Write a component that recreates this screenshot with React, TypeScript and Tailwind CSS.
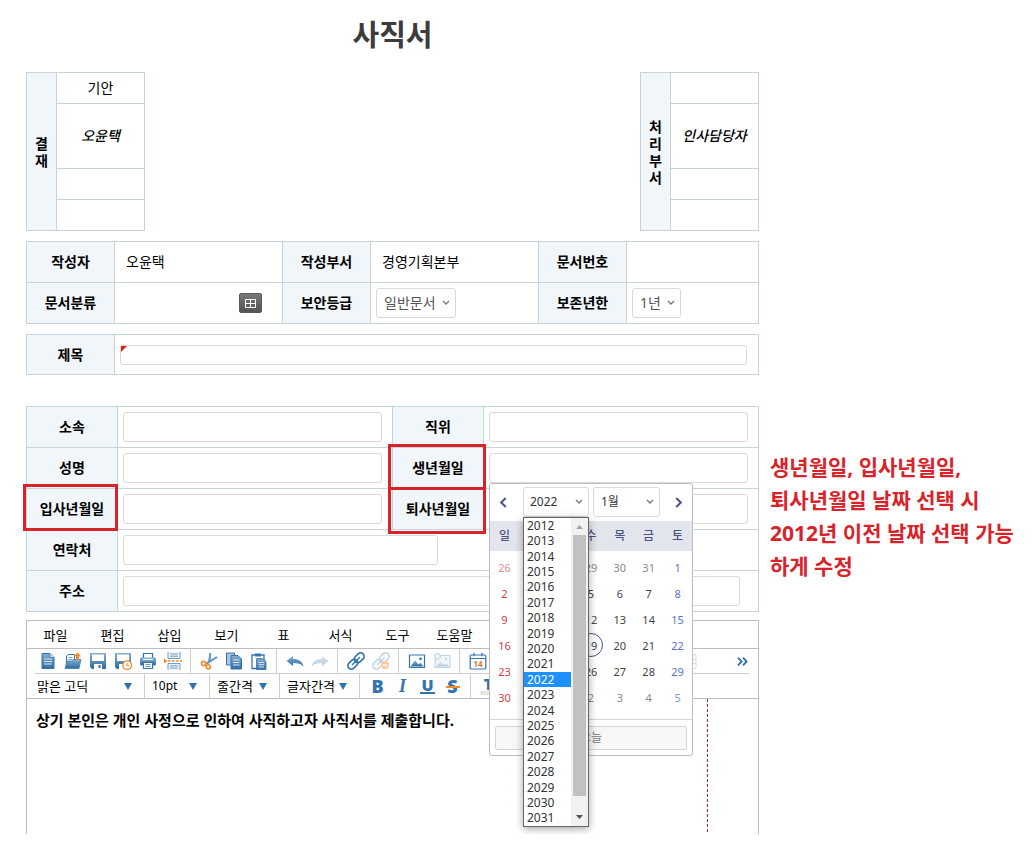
import type { ReactNode } from "react";

const line = "border-[#c6d4da]";
const th = "relative border-r border-b border-[#c6d4da] bg-[#f0f6f9] text-center font-bold";
const td = "border-r border-b border-[#c6d4da]";
const tableBase = "w-full table-fixed border-separate border-spacing-0 border-t border-l border-[#c6d4da]";
const field = "block h-[30px] rounded-[3px] border border-[#d9d9d9] bg-white px-2 outline-none";

const blue = "#3474ad";
const mid = "#6f9dc6";
const pale = "#c3d5e6";
const orange = "#f08a2a";

function Icon({ children, className = "size-[18px]" }: { children: ReactNode; className?: string }) {
  return (
    <svg viewBox="0 0 18 18" className={className} fill="none" aria-hidden="true">
      {children}
    </svg>
  );
}

function Gradients() {
  return (
    <svg className="absolute size-0" aria-hidden="true">
      <defs>
        <linearGradient id="steel" x1="0" y1="0" x2="0" y2="1">
          <stop offset="0" stopColor="#86aed2" />
          <stop offset="1" stopColor="#2f6ca3" />
        </linearGradient>
        <linearGradient id="fade" x1="0" y1="0" x2="0" y2="1">
          <stop offset="0" stopColor="#dbe6f0" />
          <stop offset="1" stopColor="#b4cadf" />
        </linearGradient>
      </defs>
    </svg>
  );
}

const icons = {
  doc: (
    <Icon>
      <path d="M3 1.5h8l4 4v11H3z" fill="url(#steel)" stroke={blue} />
      <path d="M11 1.5v4h4" fill="#dce8f3" stroke={blue} strokeWidth=".8" />
      <path d="M5 7h8M5 9.5h8M5 12h8" stroke="#d6e4f1" />
    </Icon>
  ),
  open: (
    <Icon>
      <path d="M2.5 14V4l2-1.500h6V11z" fill="#fff" stroke={blue} />
      <path d="M4.500 5.500h4M4.500 7.500h4" stroke={mid} />
      <path d="M1 16.500 3 9h5l1.500-1.500H17l-2 9z" fill="url(#steel)" stroke={blue} strokeWidth=".7" />
      <path d="M13.500.5 17 4.200h-2V8h-3V4.200h-2z" fill={orange} />
    </Icon>
  ),
  save: (
    <Icon>
      <path d="M1 1h16v16H3l-2-2z" fill="url(#steel)" />
      <path d="M3 2.500h12V9H3z" fill="#fff" />
      <path d="M5 12h8v5H5z" fill="#fff" />
      <path d="M9.500 13h2v3h-2z" fill={blue} />
    </Icon>
  ),
  saveTimed: (
    <Icon>
      <path d="M1 1h16v16H3l-2-2z" fill="url(#steel)" />
      <path d="M3 2.500h12V9H3z" fill="#fff" />
      <path d="M5 12h5v5H5z" fill="#fff" />
      <circle cx="13.200" cy="13.200" r="4.300" fill="#fff" stroke={orange} strokeWidth="1.300" />
      <path d="M13 11v2.500h2.300" stroke={orange} strokeWidth="1.100" />
    </Icon>
  ),
  print: (
    <Icon>
      <path d="M4.500 6V1.500h9V6" fill="#fff" stroke={blue} strokeWidth="1.200" />
      <rect x="1" y="5.500" width="16" height="8" rx="1.500" fill="url(#steel)" />
      <path d="M4 7.500h10" stroke="#fff" strokeWidth="1.200" />
      <path d="M4.500 10.500h9v6h-9z" fill="#fff" stroke={blue} strokeWidth="1.200" />
      <path d="M6.500 12.500h5M6.500 14.500h5" stroke={mid} />
    </Icon>
  ),
  pageBreak: (
    <Icon>
      <path d="M4 0v6.500h12V0M4 18v-6.500h12V18" fill="#eef4f9" stroke={mid} />
      <path d="M6 2h8M6 4.200h8M6 13.800h8M6 16h8" stroke={mid} />
      <path d="M4 9h14" stroke={orange} strokeWidth="1.300" strokeDasharray="2.500 1.500" />
      <path d="M0 6.500 3.500 9 0 11.500z" fill={orange} />
    </Icon>
  ),
  cut: (
    <Icon>
      <path d="M10.500 1 9 11M17 5 6.500 11.500" stroke="url(#steel)" strokeWidth="2" />
      <path d="M10.200 1.200 9.300 10.500M16.800 5.200 7 11" stroke={mid} strokeWidth="1.800" />
      <circle cx="3.600" cy="11.500" r="2.100" stroke={orange} strokeWidth="1.600" />
      <circle cx="8.300" cy="14.800" r="2.100" stroke={orange} strokeWidth="1.600" />
    </Icon>
  ),
  copy: (
    <Icon>
      <path d="M1.500 1h8v12h-8z" fill="#a9c5de" stroke={blue} />
      <path d="M6 3.500h7l3.500 3.500v10H6z" fill="url(#steel)" stroke={blue} />
      <path d="M8 8h6.500M8 10.500h6.500M8 13h6.500" stroke="#d6e4f1" />
    </Icon>
  ),
  paste: (
    <Icon>
      <path d="M2 3h12v13.500H2z" fill="#fff" stroke={blue} strokeWidth="1.300" />
      <path d="M5 1.500h6v3H5z" fill={blue} />
      <path d="M6.500 6.500h6l3.500 3v8H6.500z" fill="url(#steel)" stroke={blue} strokeWidth=".8" />
      <path d="M8.500 10.500h5.500M8.500 12.700h5.500M8.500 15h5.500" stroke="#d6e4f1" />
    </Icon>
  ),
  undo: (
    <Icon>
      <path d="M0.500 9 7 4v3c6 0 9.500 2.500 10.500 7.500C15 11.800 12 11 7 11v3z" fill="url(#steel)" />
    </Icon>
  ),
  redo: (
    <Icon>
      <path d="M17.500 9 11 4v3c-6 0-9.500 2.500-10.500 7.500C3 11.800 6 11 11 11v3z" fill="url(#fade)" />
    </Icon>
  ),
  link: (
    <Icon>
      <g transform="rotate(-45 9 9)" strokeWidth="1.700" stroke={blue}>
        <rect x="-1" y="5.500" width="11" height="7" rx="3.500" />
        <rect x="8" y="5.500" width="11" height="7" rx="3.500" />
        <path d="M3.500 9h11" strokeWidth="1.400" />
      </g>
    </Icon>
  ),
  unlink: (
    <Icon>
      <g transform="rotate(-45 9 9)" strokeWidth="1.700" stroke={pale}>
        <rect x="-1" y="5.500" width="11" height="7" rx="3.500" />
        <rect x="8" y="5.500" width="11" height="7" rx="3.500" />
        <path d="M3.500 9h11" strokeWidth="1.400" />
      </g>
      <circle cx="13" cy="13" r="4.200" fill="#f9cfa5" />
      <path d="M10.800 13h4.400" stroke="#fff" strokeWidth="1.300" />
    </Icon>
  ),
  image: (
    <Icon>
      <path d="M1.500 3h15v12.500h-15z" fill="#fff" stroke={blue} strokeWidth="1.200" />
      <path d="m2.500 14.500 4.500-6 3.500 4 2-1.800 3 3.800z" fill="url(#steel)" />
      <circle cx="12.500" cy="6.800" r="1.400" fill={blue} />
    </Icon>
  ),
  imageEdit: (
    <Icon>
      <path d="M3 3.500h14v12H2v-8z" fill="#f1f6fa" stroke={pale} strokeWidth="1.200" />
      <path d="m3 14.500 4.500-5 3.500 3.500 2-1.500 3.500 3z" fill="url(#fade)" />
      <circle cx="4.500" cy="4.500" r="2.600" fill="#fff" stroke={pale} strokeWidth="2" strokeDasharray="1.600 .6" />
      <circle cx="13" cy="7" r="1.200" fill={pale} />
    </Icon>
  ),
  date: (
    <Icon>
      <rect x="1.200" y="3" width="15.600" height="14" rx="1" fill="#fff" stroke={blue} strokeWidth="1.200" />
      <path d="M1.200 6.500h15.600M5 .8v3.500M13 .8v3.500" stroke={blue} strokeWidth="1.200" />
      <text x="9" y="15" textAnchor="middle" fontSize="8" fontWeight="700" fontFamily="Noto Sans" fill="#d9772a">14</text>
    </Icon>
  ),
  grid: (
    <Icon>
      <path d="M1 2.500h16v14H1zM1 7h16M1 11.500h16M6 2.500v14M12 2.500v14" stroke="#d5dde5" />
    </Icon>
  ),
};

function ToolGroup({ items, first, last }: { items: [string, ReactNode][]; first?: boolean; last?: boolean }) {
  return (
    <div className={`flex shrink-0 pr-[5px] ${first ? "" : "pl-[5px]"} ${last ? "" : "border-r border-[#cfcfcf]"}`}>
      {items.map(([label, icon]) => (
        <button key={label} type="button" aria-label={label} className="flex w-[25px] items-center justify-center">
          {icon}
        </button>
      ))}
    </div>
  );
}

function Chevron() {
  return (
    <svg viewBox="0 0 8 6" className="pointer-events-none absolute right-[6px] top-1/2 h-[6px] w-2 -translate-y-1/2" fill="none" aria-hidden="true">
      <path d="m1 1 3 3 3-3" stroke="#777" strokeWidth="1.300" />
    </svg>
  );
}

function Triangle() {
  return (
    <svg viewBox="0 0 8 7" className="pointer-events-none absolute right-3 top-[9px] h-[7px] w-2" aria-hidden="true">
      <path d="M0 0h8L4 7z" fill="#2f73b0" />
    </svg>
  );
}

function ApprovalTable({ title, rows }: { title: string; rows: string[] }) {
  return (
    <table className={`w-[119px] table-fixed border-separate border-spacing-0 border-t border-l ${line}`}>
      <colgroup>
        <col className="w-[30px]" />
        <col />
      </colgroup>
      <tbody>
        {rows.map((text, i) => (
          <tr key={i}>
            {i === 0 && (
              <th rowSpan={4} className={`${th} px-2 leading-[17px] break-all`}>
                {title}
              </th>
            )}
            <td className={`${td} p-0 text-center ${i === 1 ? "h-[65px] font-medium italic" : "h-[31px]"}`}>{text}</td>
          </tr>
        ))}
      </tbody>
    </table>
  );
}

const weekdays = ["일", "월", "화", "수", "목", "금", "토"];
const weeks = [
  [26, 27, 28, 29, 30, 31, 1],
  [2, 3, 4, 5, 6, 7, 8],
  [9, 10, 11, 12, 13, 14, 15],
  [16, 17, 18, 19, 20, 21, 22],
  [23, 24, 25, 26, 27, 28, 29],
  [30, 31, 1, 2, 3, 4, 5],
];

function dayColor(week: number, day: number, date: number) {
  const outside = (week === 0 && date > 20) || (week === 5 && date < 20);
  if (day === 0) return outside ? "text-[#ec8b8b]" : "text-[#cf3f3f]";
  if (day === 6) return outside ? "text-[#7f9be8]" : "text-[#5673d2]";
  return outside ? "text-[#8a8a8a]" : "text-[#444]";
}

const years = Array.from({ length: 20 }, (_, i) => 2012 + i);

function YearList() {
  return (
    <div className="absolute top-full left-0 flex h-[310px] w-full border border-[#666] bg-white shadow-[0_2px_8px_rgba(0,0,0,0.35)]">
      <ul role="listbox" aria-label="연도 목록" className="flex flex-1 flex-col text-xs text-[#333]">
        {years.map((y) => (
          <li
            key={y}
            role="option"
            aria-selected={y === 2022}
            className={`flex flex-1 items-center pl-[3px] leading-[14px] ${y === 2022 ? "bg-[#1e90ff] text-white" : ""}`}
          >
            {y}
          </li>
        ))}
      </ul>
      <div className="flex w-[17px] flex-col items-center bg-[#f1f1f1]">
        <svg viewBox="0 0 17 17" className="size-[17px] shrink-0" aria-hidden="true">
          <path d="M5 11h7L8.500 7z" fill="#a3a3a3" />
        </svg>
        <div className="w-[13px] flex-1 bg-[#c1c1c1]" />
        <svg viewBox="0 0 17 30" className="h-[30px] w-[17px] shrink-0" aria-hidden="true">
          <path d="M5 19h7l-3.500 4z" fill="#505050" />
        </svg>
      </div>
    </div>
  );
}

function Arrow({ d }: { d: string }) {
  return (
    <svg viewBox="0 0 8 12" className="h-[11px] w-2" fill="none" aria-hidden="true">
      <path d={d} stroke="#4a5584" strokeWidth="2.200" />
    </svg>
  );
}

function Calendar() {
  return (
    <div className="absolute top-full left-0 z-10 w-[204px] rounded-[3px] border border-[#bdbdbd] bg-white">
      <div className="flex h-[37px] pt-[3px] pb-1">
        <button type="button" aria-label="이전 달" className="flex w-[26px] items-center justify-center">
          <Arrow d="M7 1 2 6l5 5" />
        </button>
        <div className="relative ml-[7px] w-[66px]">
          <select aria-label="연도" defaultValue="2022" className="block h-[30px] w-full appearance-none rounded-[3px] border border-[#d9d9d9] bg-white pl-[6px] text-xs text-[#333]">
            <option>2022</option>
          </select>
          <Chevron />
          <YearList />
        </div>
        <div className="relative ml-1 w-[67px]">
          <select aria-label="월" defaultValue="1월" className="block h-[30px] w-full appearance-none rounded-[3px] border border-[#d9d9d9] bg-white pl-[7px] text-xs text-[#333]">
            <option>1월</option>
          </select>
          <Chevron />
        </div>
        <button type="button" aria-label="다음 달" className="ml-[6px] flex w-[26px] items-center justify-center">
          <Arrow d="m1 1 5 5-5 5" />
        </button>
      </div>
      <table className="w-full table-fixed border-separate border-spacing-0">
        <thead>
          <tr>
            {weekdays.map((d) => (
              <th key={d} className="h-[30px] bg-[#e3e5ec] p-0 text-center text-xs font-medium text-[#4a5584]">
                {d}
              </th>
            ))}
          </tr>
        </thead>
      </table>
      <table className="mt-[3px] w-full table-fixed border-separate border-spacing-0">
        <tbody>
          {weeks.map((week, w) => (
            <tr key={w}>
              {week.map((date, d) => (
                <td key={d} className="h-[26px] p-0 text-center">
                  <button
                    type="button"
                    className={`size-6 rounded-full border align-middle text-[11px] leading-none ${dayColor(w, d, date)} ${date === 19 ? "border-[#4a5584]" : "border-transparent"}`}
                  >
                    {date}
                  </button>
                </td>
              ))}
            </tr>
          ))}
        </tbody>
      </table>
      <div className="mt-[9px] border-t border-[#d5d5d5] px-[5px] pt-[6px] pb-[5px]">
        <button type="button" className="h-6 w-full rounded-[2px] border border-[#d5d5d5] bg-[#f7f7f7] text-xs text-[#777]">
          오늘
        </button>
      </div>
    </div>
  );
}

function Mark({ className }: { className: string }) {
  return <span className={`pointer-events-none absolute z-[5] border-3 border-[#d8232a] ${className}`} />;
}

const glyph = "flex w-[25px] items-center justify-center text-lg leading-none text-[#3474ad]";

function Editor() {
  return (
    <section className="mt-2 border-x border-t border-[#bdbdbd]">
      <nav className="flex h-7 border-b border-[#bdbdbd] text-[13px]">
        {["파일", "편집", "삽입", "보기", "표", "서식", "도구", "도움말"].map((m) => (
          <button key={m} type="button" className="w-[57px]">
            {m}
          </button>
        ))}
      </nav>
      <div className="mx-2 flex h-[25px] border-b border-[#cfcfcf]">
        <ToolGroup
          first
          items={[
            ["새 문서", icons.doc],
            ["열기", icons.open],
            ["저장", icons.save],
            ["자동 저장", icons.saveTimed],
            ["인쇄", icons.print],
            ["쪽 나누기", icons.pageBreak],
          ]}
        />
        <ToolGroup items={[["잘라내기", icons.cut], ["복사", icons.copy], ["붙여넣기", icons.paste]]} />
        <ToolGroup items={[["실행 취소", icons.undo], ["다시 실행", icons.redo]]} />
        <ToolGroup items={[["링크", icons.link], ["링크 해제", icons.unlink]]} />
        <ToolGroup items={[["그림", icons.image], ["그림 편집", icons.imageEdit]]} />
        <ToolGroup last items={[["날짜", icons.date]]} />
        <button type="button" aria-label="표 삽입" className="ml-auto">
          {icons.grid}
        </button>
        <button type="button" aria-label="더 보기" className="mr-[2px] ml-10">
          <svg viewBox="0 0 11 9" className="h-[9px] w-[11px]" fill="none" aria-hidden="true">
            <path d="m1 .7 3.600 3.800L1 8.300M6 .7l3.600 3.800L6 8.300" stroke={blue} strokeWidth="1.900" />
          </svg>
        </button>
      </div>
      <div className="flex h-[25px] border-b border-[#bdbdbd] pl-2 text-[13px]">
        <div className="relative w-[110px] border-r border-[#cfcfcf]">
          <select aria-label="글꼴" className="h-full w-full appearance-none pl-[2px]">
            <option>맑은 고딕</option>
          </select>
          <Triangle />
        </div>
        <div className="relative w-[65px] border-r border-[#cfcfcf]">
          <select aria-label="글자 크기" className="h-full w-full appearance-none pl-[7px] text-xs">
            <option>10pt</option>
          </select>
          <Triangle />
        </div>
        <button type="button" className="relative w-[70px] border-r border-[#cfcfcf] pl-[7px] text-left">
          줄간격
          <Triangle />
        </button>
        <button type="button" className="relative w-20 border-r border-[#cfcfcf] pl-[7px] text-left">
          글자간격
          <Triangle />
        </button>
        <div className="flex border-r border-[#cfcfcf] px-[5px] font-black">
          <button type="button" aria-label="굵게" className={glyph}>
            <b className="font-black">B</b>
          </button>
          <button type="button" aria-label="기울임" className={glyph}>
            <i className="font-['Liberation_Serif']">I</i>
          </button>
          <button type="button" aria-label="밑줄" className={glyph}>
            <span className="border-b-2 border-[#3474ad] px-px text-base leading-[14px]">U</span>
          </button>
          <button type="button" aria-label="취소선" className={`${glyph} relative`}>
            S
            <span className="absolute top-1/2 h-[2px] w-[14px] bg-[#f08a2a]" />
          </button>
        </div>
        <button type="button" aria-label="글자색" className={`${glyph} ml-[5px] font-black`}>
          <span className="border-b-4 border-[#e6e6e6] px-1 text-base leading-[14px]">T</span>
        </button>
      </div>
      <div className="flex h-[135px]">
        <textarea
          aria-label="본문"
          className="block min-w-0 flex-1 resize-none bg-white px-[9px] pt-[11px] text-[15px] leading-5 font-bold outline-none"
          defaultValue="상기 본인은 개인 사정으로 인하여 사직하고자 사직서를 제출합니다."
        />
        <div className="mr-[50px] w-px bg-[repeating-linear-gradient(to_bottom,#c2202c_0px,#c2202c_3px,#ffffff_3px,#ffffff_5px)]" />
      </div>
    </section>
  );
}

export default function App() {
  return (
    <main className="flex gap-[11px] bg-white pl-[26px] font-['Noto_Sans','Noto_Sans_CJK_KR',sans-serif] text-sm leading-5 text-black">
      <Gradients />
      <form className="min-w-0 flex-1 pt-[14px]">
        <h1 className="mb-4 text-center text-[29px] leading-[42px] font-bold text-[#3c3c3c]">사직서</h1>

        <div className="flex justify-between">
          <ApprovalTable title="결재" rows={["기안", "오윤택", "", ""]} />
          <ApprovalTable title="처리부서" rows={["", "인사담당자", "", ""]} />
        </div>

        <table className={`${tableBase} mt-[10px]`}>
          <colgroup>
            <col className="w-[88px]" />
            <col className="w-[168px]" />
            <col className="w-[88px]" />
            <col className="w-[168px]" />
            <col className="w-[88px]" />
            <col />
          </colgroup>
          <tbody>
            <tr className="h-[41px]">
              <th className={th}>작성자</th>
              <td className={`${td} px-[11px]`}>오윤택</td>
              <th className={th}>작성부서</th>
              <td className={`${td} px-[11px]`}>경영기획본부</td>
              <th className={th}>문서번호</th>
              <td className={td} />
            </tr>
            <tr className="h-[41px]">
              <th className={th}>문서분류</th>
              <td className={`${td} pr-5`}>
                <button type="button" aria-label="문서분류 선택" className="ml-auto flex h-5 w-[23px] items-center justify-center rounded-[2px] border border-[#5a5a5a] bg-linear-to-b from-[#777] to-[#555]">
                  <svg viewBox="0 0 11 9" className="h-[9px] w-[11px]" fill="none" aria-hidden="true">
                    <path d="M.5.5h10v8H.5zM1 4.500h9M5.500 1v7" stroke="#fff" />
                  </svg>
                </button>
              </td>
              <th className={th}>
                <label htmlFor="security">보안등급</label>
              </th>
              <td className={`${td} px-[5px]`}>
                <div className="relative w-20">
                  <select id="security" className="h-[30px] w-full appearance-none rounded-[3px] border border-[#d9d9d9] bg-white pl-[7px] text-[#555]">
                    <option>일반문서</option>
                  </select>
                  <Chevron />
                </div>
              </td>
              <th className={th}>
                <label htmlFor="keep">보존년한</label>
              </th>
              <td className={`${td} px-[5px]`}>
                <div className="relative w-[49px]">
                  <select id="keep" className="h-[30px] w-full appearance-none rounded-[3px] border border-[#d9d9d9] bg-white pl-[7px] text-[#555]">
                    <option>1년</option>
                  </select>
                  <Chevron />
                </div>
              </td>
            </tr>
          </tbody>
        </table>

        <table className={`${tableBase} mt-[10px]`}>
          <colgroup>
            <col className="w-[88px]" />
            <col />
          </colgroup>
          <tbody>
            <tr className="h-10">
              <th className={th}>
                <label htmlFor="subject">제목</label>
              </th>
              <td className={`${td} pr-[11px] pl-[5px]`}>
                <div className="relative">
                  <input id="subject" required className="block h-5 w-full rounded-[3px] border border-[#d9d9d9] px-2 outline-none" />
                  <svg viewBox="0 0 6 6" className="absolute top-px left-px size-[6px]" aria-hidden="true">
                    <path d="M0 0h6L0 6z" fill="#d81e1e" />
                  </svg>
                </div>
              </td>
            </tr>
          </tbody>
        </table>

        <table className={`${tableBase} mt-[31px]`}>
          <colgroup>
            <col className="w-[91px]" />
            <col />
            <col className="w-[91px]" />
            <col />
          </colgroup>
          <tbody>
            <tr className="h-[41px]">
              <th className={th}>
                <label htmlFor="dept">소속</label>
              </th>
              <td className={`${td} pr-[10px] pl-[5px]`}>
                <input id="dept" className={`${field} w-full`} />
              </td>
              <th className={th}>
                <label htmlFor="rank">직위</label>
              </th>
              <td className={`${td} pr-[10px] pl-[5px]`}>
                <input id="rank" className={`${field} w-full`} />
              </td>
            </tr>
            <tr className="h-[41px]">
              <th className={th}>
                <label htmlFor="name">성명</label>
              </th>
              <td className={`${td} pr-[10px] pl-[5px]`}>
                <input id="name" className={`${field} w-full`} />
              </td>
              <th className={th}>
                <label htmlFor="birth">생년월일</label>
                <Mark className="-top-1 -right-[3px] -bottom-[2px] -left-[5px]" />
              </th>
              <td className={`${td} pr-[10px] pl-[5px]`}>
                <div className="relative">
                  <input id="birth" className={`${field} w-full`} />
                  <Calendar />
                </div>
              </td>
            </tr>
            <tr className="h-[41px]">
              <th className={th}>
                <label htmlFor="joined">입사년월일</label>
                <Mark className="-top-[5px] -right-px -bottom-[2px] -left-1" />
              </th>
              <td className={`${td} pr-[10px] pl-[5px]`}>
                <input id="joined" className={`${field} w-full`} />
              </td>
              <th className={th}>
                <label htmlFor="left">퇴사년월일</label>
                <Mark className="-top-[2px] -right-[3px] -bottom-[5px] -left-[5px]" />
              </th>
              <td className={`${td} pr-[10px] pl-[5px]`}>
                <input id="left" className={`${field} w-full`} />
              </td>
            </tr>
            <tr className="h-[41px]">
              <th className={th}>
                <label htmlFor="phone">연락처</label>
              </th>
              <td colSpan={3} className={`${td} pl-[5px]`}>
                <input id="phone" className={`${field} w-[315px]`} />
              </td>
            </tr>
            <tr className="h-[41px]">
              <th className={th}>
                <label htmlFor="address">주소</label>
              </th>
              <td colSpan={3} className={`${td} pr-[18px] pl-[5px]`}>
                <input id="address" className={`${field} w-full`} />
              </td>
            </tr>
          </tbody>
        </table>

        <Editor />
      </form>

      <p className="w-[264px] shrink-0 pt-[451px] text-[21px] leading-[33px] font-bold whitespace-nowrap text-[#d8232a]">
        생년월일, 입사년월일,
        <br />
        퇴사년월일 날짜 선택 시
        <br />
        2012년 이전 날짜 선택 가능
        <br />
        하게 수정
      </p>
    </main>
  );
}
